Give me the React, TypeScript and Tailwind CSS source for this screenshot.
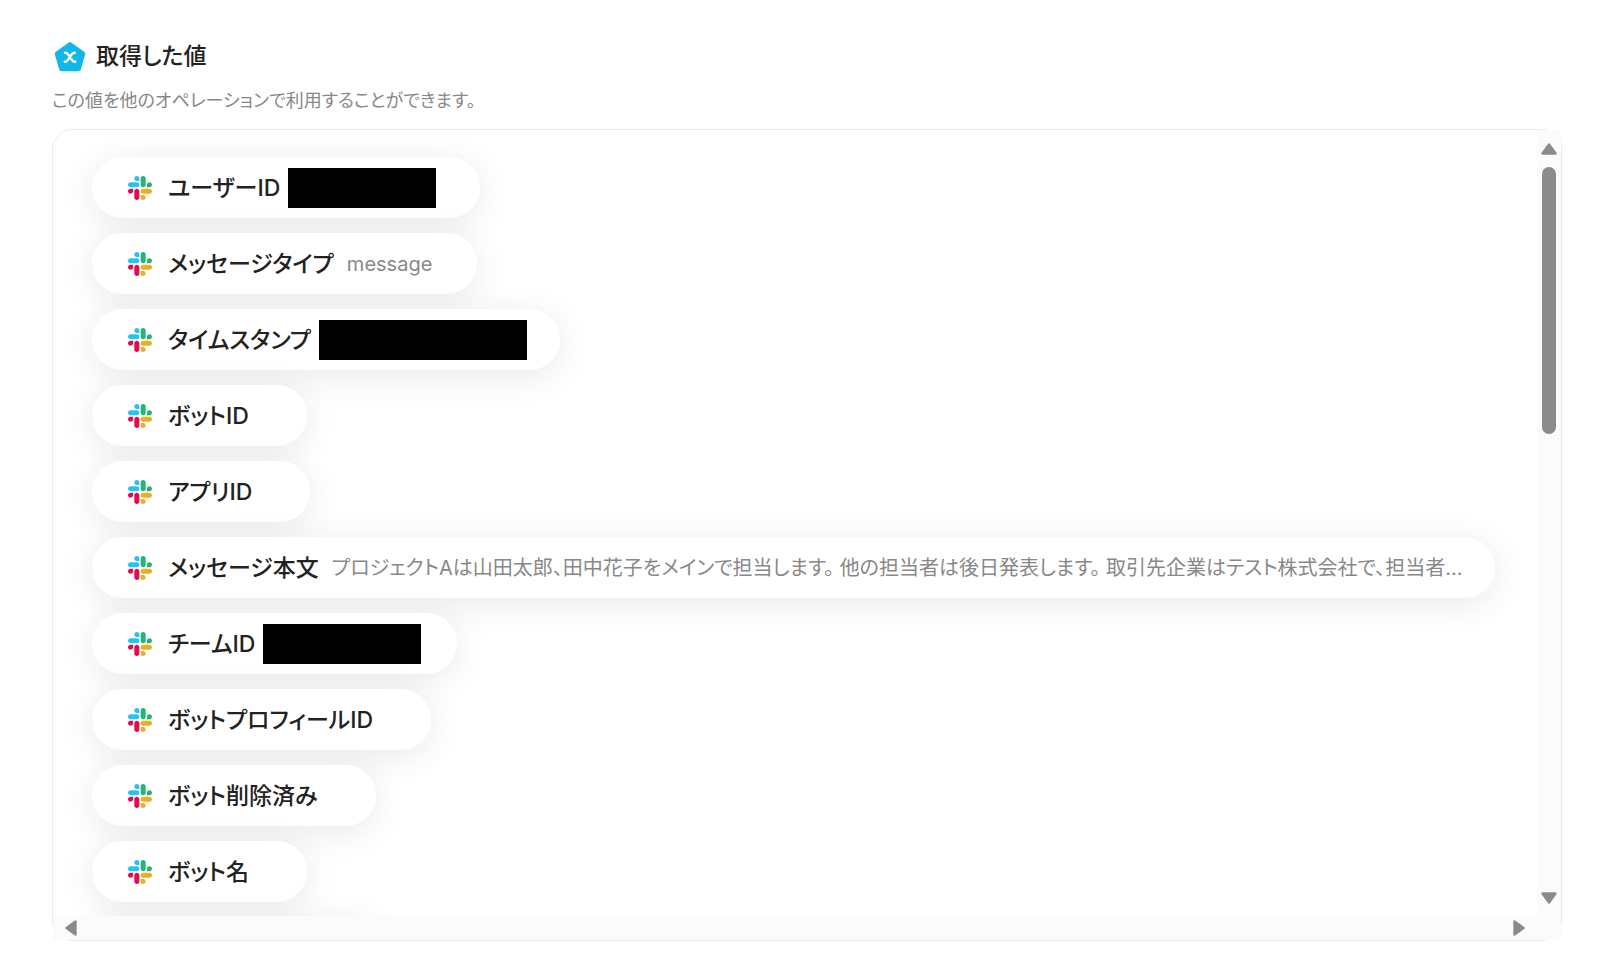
type Item = { label: string; value?: string; masked?: string; long?: boolean };

const items: Item[] = [
  { label: "ユーザーID", masked: "w-[148px] mr-11" },
  { label: "メッセージタイプ", value: "message" },
  { label: "タイムスタンプ", masked: "w-[208px] mr-[33px]" },
  { label: "ボットID" },
  { label: "アプリID" },
  {
    label: "メッセージ本文",
    value:
      "プロジェクトAは山田太郎、田中花子をメインで担当します。 他の担当者は後日発表します。 取引先企業はテスト株式会社で、担当者...",
    long: true,
  },
  { label: "チームID", masked: "w-[158px] mr-[36px]" },
  { label: "ボットプロフィールID" },
  { label: "ボット削除済み" },
  { label: "ボット名" },
];

function SlackIcon() {
  return (
    <svg className="size-6 shrink-0" viewBox="0 0 122.8 122.8" aria-hidden="true">
      <path fill="#E5094F" d="M25.8 77.6c0 7.1-5.8 12.9-12.9 12.9S0 84.7 0 77.6s5.8-12.9 12.9-12.9h12.9v12.9zm6.5 0c0-7.1 5.8-12.9 12.9-12.9s12.9 5.8 12.9 12.9v32.3c0 7.1-5.8 12.9-12.9 12.9s-12.9-5.8-12.9-12.9V77.6z" />
      <path fill="#28C1F5" d="M45.2 25.8c-7.1 0-12.9-5.8-12.9-12.9S38.1 0 45.2 0s12.9 5.8 12.9 12.9v12.9H45.2zm0 6.5c7.1 0 12.9 5.8 12.9 12.9s-5.8 12.9-12.9 12.9H12.9C5.8 58.1 0 52.3 0 45.2s5.8-12.9 12.9-12.9h32.3z" />
      <path fill="#22B573" d="M97 45.2c0-7.1 5.8-12.9 12.9-12.9s12.9 5.8 12.9 12.9-5.8 12.9-12.9 12.9H97V45.2zm-6.5 0c0 7.1-5.8 12.9-12.9 12.9s-12.9-5.8-12.9-12.9V12.9C64.7 5.8 70.5 0 77.6 0s12.9 5.8 12.9 12.9v32.3z" />
      <path fill="#EFAE22" d="M77.6 97c7.1 0 12.9 5.8 12.9 12.9s-5.8 12.9-12.9 12.9-12.9-5.8-12.9-12.9V97h12.9zm0-6.5c-7.1 0-12.9-5.8-12.9-12.9s5.8-12.9 12.9-12.9h32.3c7.1 0 12.9 5.8 12.9 12.9s-5.8 12.9-12.9 12.9H77.6z" />
    </svg>
  );
}

function ValueIcon() {
  return (
    <svg className="size-8 shrink-0" viewBox="0 0 32 32" aria-hidden="true">
      <path
        d="M16 4 29.300 13.600 24.800 29.300H7.200L2.700 13.600Z"
        fill="#12B7EA"
        stroke="#12B7EA"
        strokeWidth="4"
        strokeLinejoin="round"
      />
      <path
        d="M11 12.800c1.600 0 2.200.2 3 1.300l4.200 6.200c.7 1.100 1.400 1.500 3 1.500M20.800 12.800c-1.400 0-2.200.4-3 1.500l-4 5.800c-.8 1.200-1.500 1.700-3 1.700"
        fill="none"
        stroke="#fff"
        strokeWidth="2.400"
        strokeLinecap="round"
      />
    </svg>
  );
}

function Arrow({ label, turn }: { label: string; turn: string }) {
  return (
    <button type="button" aria-label={label} className="block shrink-0">
      <svg className={`h-3 w-4 ${turn}`} viewBox="0 0 16 12" aria-hidden="true">
        <path d="M8 1.500 14.500 10.500H1.500Z" fill="#8B8B8B" stroke="#8B8B8B" strokeWidth="2.400" strokeLinejoin="round" />
      </svg>
    </button>
  );
}

const pill =
  "flex h-[61px] max-w-full items-center rounded-full bg-white shadow-[0_6px_36px_rgba(0,0,0,0.09)]";

export default function App() {
  return (
    <main
      lang="ja"
      className="flex h-screen flex-col bg-white pt-10 pr-[38px] pb-[23px] pl-[52px] font-['Inter','Noto_Sans_CJK_JP',sans-serif] text-[#222] [font-feature-settings:'palt']"
    >
      <header>
        <div className="flex items-center gap-2.5 pl-0.5">
          <ValueIcon />
          <h1 className="text-[23px] leading-8 font-medium">取得した値</h1>
        </div>
        <p className="mt-[17px] text-[18px] leading-6 text-[#888]">
          この値を他のオペレーションで利用することができます。
        </p>
      </header>

      <section
        aria-label="取得した値"
        className="mt-4 grid min-h-0 flex-1 grid-cols-[minmax(0,1fr)_24px] grid-rows-[minmax(0,1fr)_24px] rounded-[20px] border border-[#ececec]"
      >
        <ul className="flex flex-col items-start gap-[15px] overflow-hidden rounded-tl-[20px] pt-[27px] pr-[37px] pl-[39px]">
          {items.map((item) => (
            <li key={item.label} className={`${pill} shrink-0 pl-9`}>
              <SlackIcon />
              <span className="ml-4 shrink-0 text-[23px] leading-8 font-medium">{item.label}</span>
              {item.masked ? (
                <span className={`ml-2 h-10 bg-black ${item.masked}`} />
              ) : (
                <span
                  className={`ml-[13px] truncate text-[20px] leading-8 text-[#888] ${item.long ? "mr-8" : "mr-[45px]"}`}
                >
                  {item.value}
                </span>
              )}
            </li>
          ))}
          <li aria-hidden="true" className={`${pill} w-[290px] shrink-0`} />
        </ul>
        <div className="flex flex-col items-center bg-[#fbfbfb] pt-[13px] pb-3">
          <Arrow label="上へ" turn="rotate-0" />
          <div className="my-3 min-h-0 w-3.5 flex-1">
            <div className="h-3/8 rounded-full bg-[#8b8b8b]" />
          </div>
          <Arrow label="下へ" turn="rotate-180" />
        </div>
        <div className="flex items-center justify-between bg-[#fbfbfb] px-2.5">
          <Arrow label="左へ" turn="-rotate-90" />
          <Arrow label="右へ" turn="rotate-90" />
        </div>
        <div className="bg-[#fbfbfb]" />
      </section>
    </main>
  );
}
